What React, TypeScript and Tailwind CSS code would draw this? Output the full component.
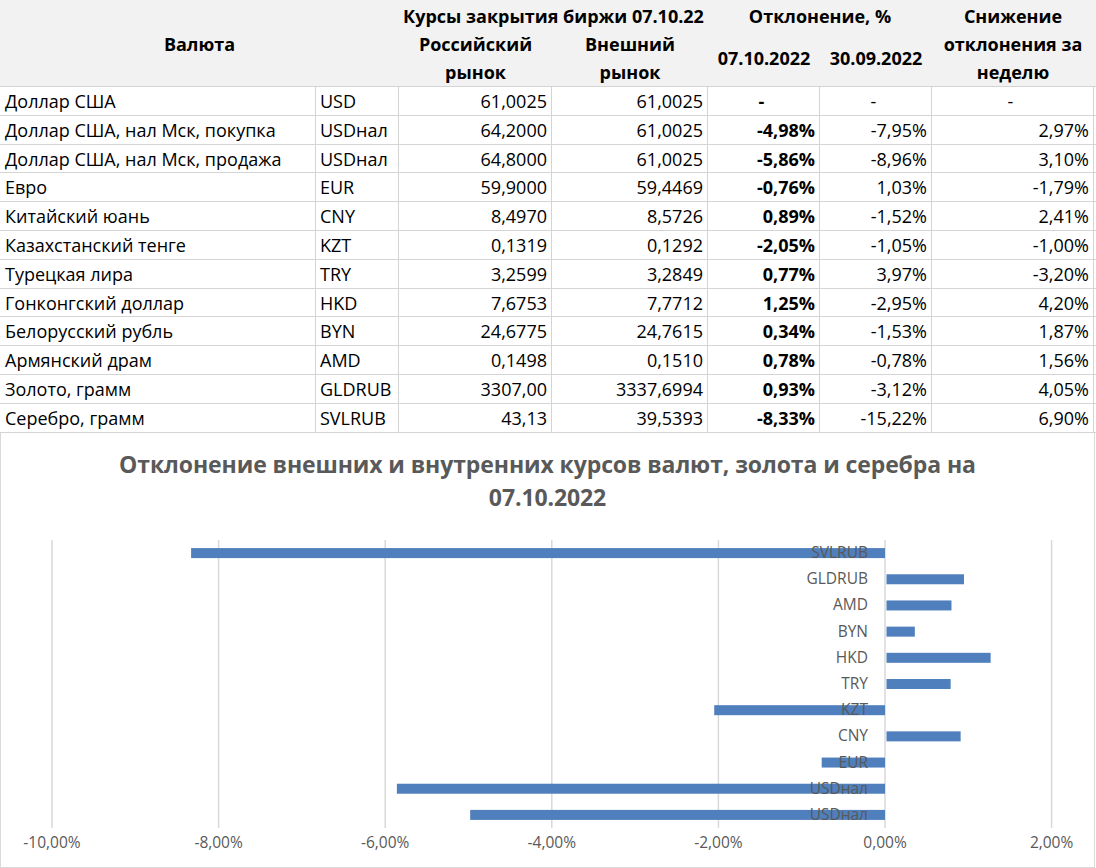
import React from 'react';

type Row = {
  name: string;
  code: string;
  ru: string;
  ext: string;
  d1: string;
  d2: string;
  diff: string;
};

const rows: Row[] = [
  { name: 'Доллар США', code: 'USD', ru: '61,0025', ext: '61,0025', d1: '-', d2: '-', diff: '-' },
  { name: 'Доллар США, нал Мск, покупка', code: 'USDнал', ru: '64,2000', ext: '61,0025', d1: '-4,98%', d2: '-7,95%', diff: '2,97%' },
  { name: 'Доллар США, нал Мск, продажа', code: 'USDнал', ru: '64,8000', ext: '61,0025', d1: '-5,86%', d2: '-8,96%', diff: '3,10%' },
  { name: 'Евро', code: 'EUR', ru: '59,9000', ext: '59,4469', d1: '-0,76%', d2: '1,03%', diff: '-1,79%' },
  { name: 'Китайский юань', code: 'CNY', ru: '8,4970', ext: '8,5726', d1: '0,89%', d2: '-1,52%', diff: '2,41%' },
  { name: 'Казахстанский тенге', code: 'KZT', ru: '0,1319', ext: '0,1292', d1: '-2,05%', d2: '-1,05%', diff: '-1,00%' },
  { name: 'Турецкая лира', code: 'TRY', ru: '3,2599', ext: '3,2849', d1: '0,77%', d2: '3,97%', diff: '-3,20%' },
  { name: 'Гонконгский доллар', code: 'HKD', ru: '7,6753', ext: '7,7712', d1: '1,25%', d2: '-2,95%', diff: '4,20%' },
  { name: 'Белорусский рубль', code: 'BYN', ru: '24,6775', ext: '24,7615', d1: '0,34%', d2: '-1,53%', diff: '1,87%' },
  { name: 'Армянский драм', code: 'AMD', ru: '0,1498', ext: '0,1510', d1: '0,78%', d2: '-0,78%', diff: '1,56%' },
  { name: 'Золото, грамм', code: 'GLDRUB', ru: '3307,00', ext: '3337,6994', d1: '0,93%', d2: '-3,12%', diff: '4,05%' },
  { name: 'Серебро, грамм', code: 'SVLRUB', ru: '43,13', ext: '39,5393', d1: '-8,33%', d2: '-15,22%', diff: '6,90%' },
];

// chart order, top to bottom
const bars = [
  { label: 'SVLRUB', v: -8.33 },
  { label: 'GLDRUB', v: 0.93 },
  { label: 'AMD', v: 0.78 },
  { label: 'BYN', v: 0.34 },
  { label: 'HKD', v: 1.25 },
  { label: 'TRY', v: 0.77 },
  { label: 'KZT', v: -2.05 },
  { label: 'CNY', v: 0.89 },
  { label: 'EUR', v: -0.76 },
  { label: 'USDнал', v: -5.86 },
  { label: 'USDнал', v: -4.98 },
];

const ticks = [-10, -8, -6, -4, -2, 0, 2];
const cols = 'grid grid-cols-[316px_83px_153px_156px_112px_112px_162px]';

const Chart = () => {
  const zero = 884;
  const unit = 83.3;
  const top = 20;
  const plotH = 288;
  const band = plotH / bars.length;
  const fmt = (t: number) => `${t.toFixed(2).replace('.', ',')}%`;

  return (
    <svg width={1092} height={345} className="block">
      {ticks.map(t => (
        <line key={t} x1={zero + t * unit} x2={zero + t * unit} y1={top} y2={top + plotH} stroke="#d9d9d9" strokeWidth={1.5} />
      ))}
      {bars.map((b, i) => {
        const cy = top + band * (i + 0.5);
        const x0 = b.v < 0 ? zero + b.v * unit : zero + 1.5;
        const w = Math.abs(b.v) * unit;
        return <rect key={i} x={x0} y={cy - 5} width={w} height={10} fill="#4f7fbc" />;
      })}
      {bars.map((b, i) => {
        const cy = top + band * (i + 0.5);
        return (
          <text key={'l' + i} x={867} y={cy + 5} textAnchor="end" fontSize={15.5} fill="#595959" fontFamily="'Open Sans', sans-serif">
            {b.label}
          </text>
        );
      })}
      {ticks.map(t => (
        <text key={'t' + t} x={zero + t * unit} y={328} textAnchor="middle" fontSize={15.5} fill="#595959" fontFamily="'Open Sans', sans-serif">
          {fmt(t)}
        </text>
      ))}
    </svg>
  );
};

export default function App() {
  return (
    <div className="w-[1096px] bg-white text-black font-['Open_Sans',sans-serif] text-[18px]">
      {/* Header */}
      <div className={`${cols} grid-rows-[28px_28px_28px] h-[86px] pt-[2px] bg-[#f2f2f2] font-bold leading-[28px]`}>
        <div className="col-span-2 row-span-3 flex items-center justify-center">Валюта</div>
        <div className="col-span-2 text-center whitespace-nowrap">Курсы закрытия биржи 07.10.22</div>
        <div className="col-span-2 text-center">Отклонение, %</div>
        <div className="row-span-3 flex flex-col items-center">
          <span>Снижение</span>
          <span>отклонения за</span>
          <span>неделю</span>
        </div>
        <div className="row-span-2 flex flex-col items-center">
          <span>Российский</span>
          <span>рынок</span>
        </div>
        <div className="row-span-2 flex flex-col items-center">
          <span>Внешний</span>
          <span>рынок</span>
        </div>
        <div className="row-span-2 flex items-center justify-center">07.10.2022</div>
        <div className="row-span-2 flex items-center justify-center">30.09.2022</div>
      </div>

      {/* Rows */}
      <div className="border-t border-[#d4d4d4]">
        {rows.map((r, i) => (
          <div key={i} className={`${cols} h-[28.8px] leading-[28px] border-b border-[#d4d4d4]`}>
            <div className="pl-[5px] border-r border-[#d4d4d4] whitespace-nowrap">{r.name}</div>
            <div className="pl-[4px] border-r border-[#d4d4d4]">{r.code}</div>
            <div className="pr-[4px] text-right border-r border-[#d4d4d4]">{r.ru}</div>
            <div className="pr-[4px] text-right border-r border-[#d4d4d4]">{r.ext}</div>
            <div className={`pr-[4px] font-bold border-r border-[#d4d4d4] ${r.d1 === '-' ? 'text-center' : 'text-right'}`}>{r.d1}</div>
            <div className={`pr-[4px] border-r border-[#d4d4d4] ${r.d2 === '-' ? 'text-center' : 'text-right'}`}>{r.d2}</div>
            <div className={`pr-[4px] border-r border-[#d4d4d4] ${r.diff === '-' ? 'text-center' : 'text-right'}`}>{r.diff}</div>
          </div>
        ))}
      </div>

      {/* Chart */}
      <div className="w-[1095px] h-[435px] border border-[#d9d9d9] border-t-0 flex flex-col">
        <div className="pt-[15px] h-[87px] text-center text-[23px] leading-[33px] font-bold text-[#595959] tracking-[-0.1px] whitespace-nowrap">
          <div>Отклонение внешних и внутренних курсов валют, золота и серебра на</div>
          <div>07.10.2022</div>
        </div>
        <Chart />
      </div>
    </div>
  );
}
